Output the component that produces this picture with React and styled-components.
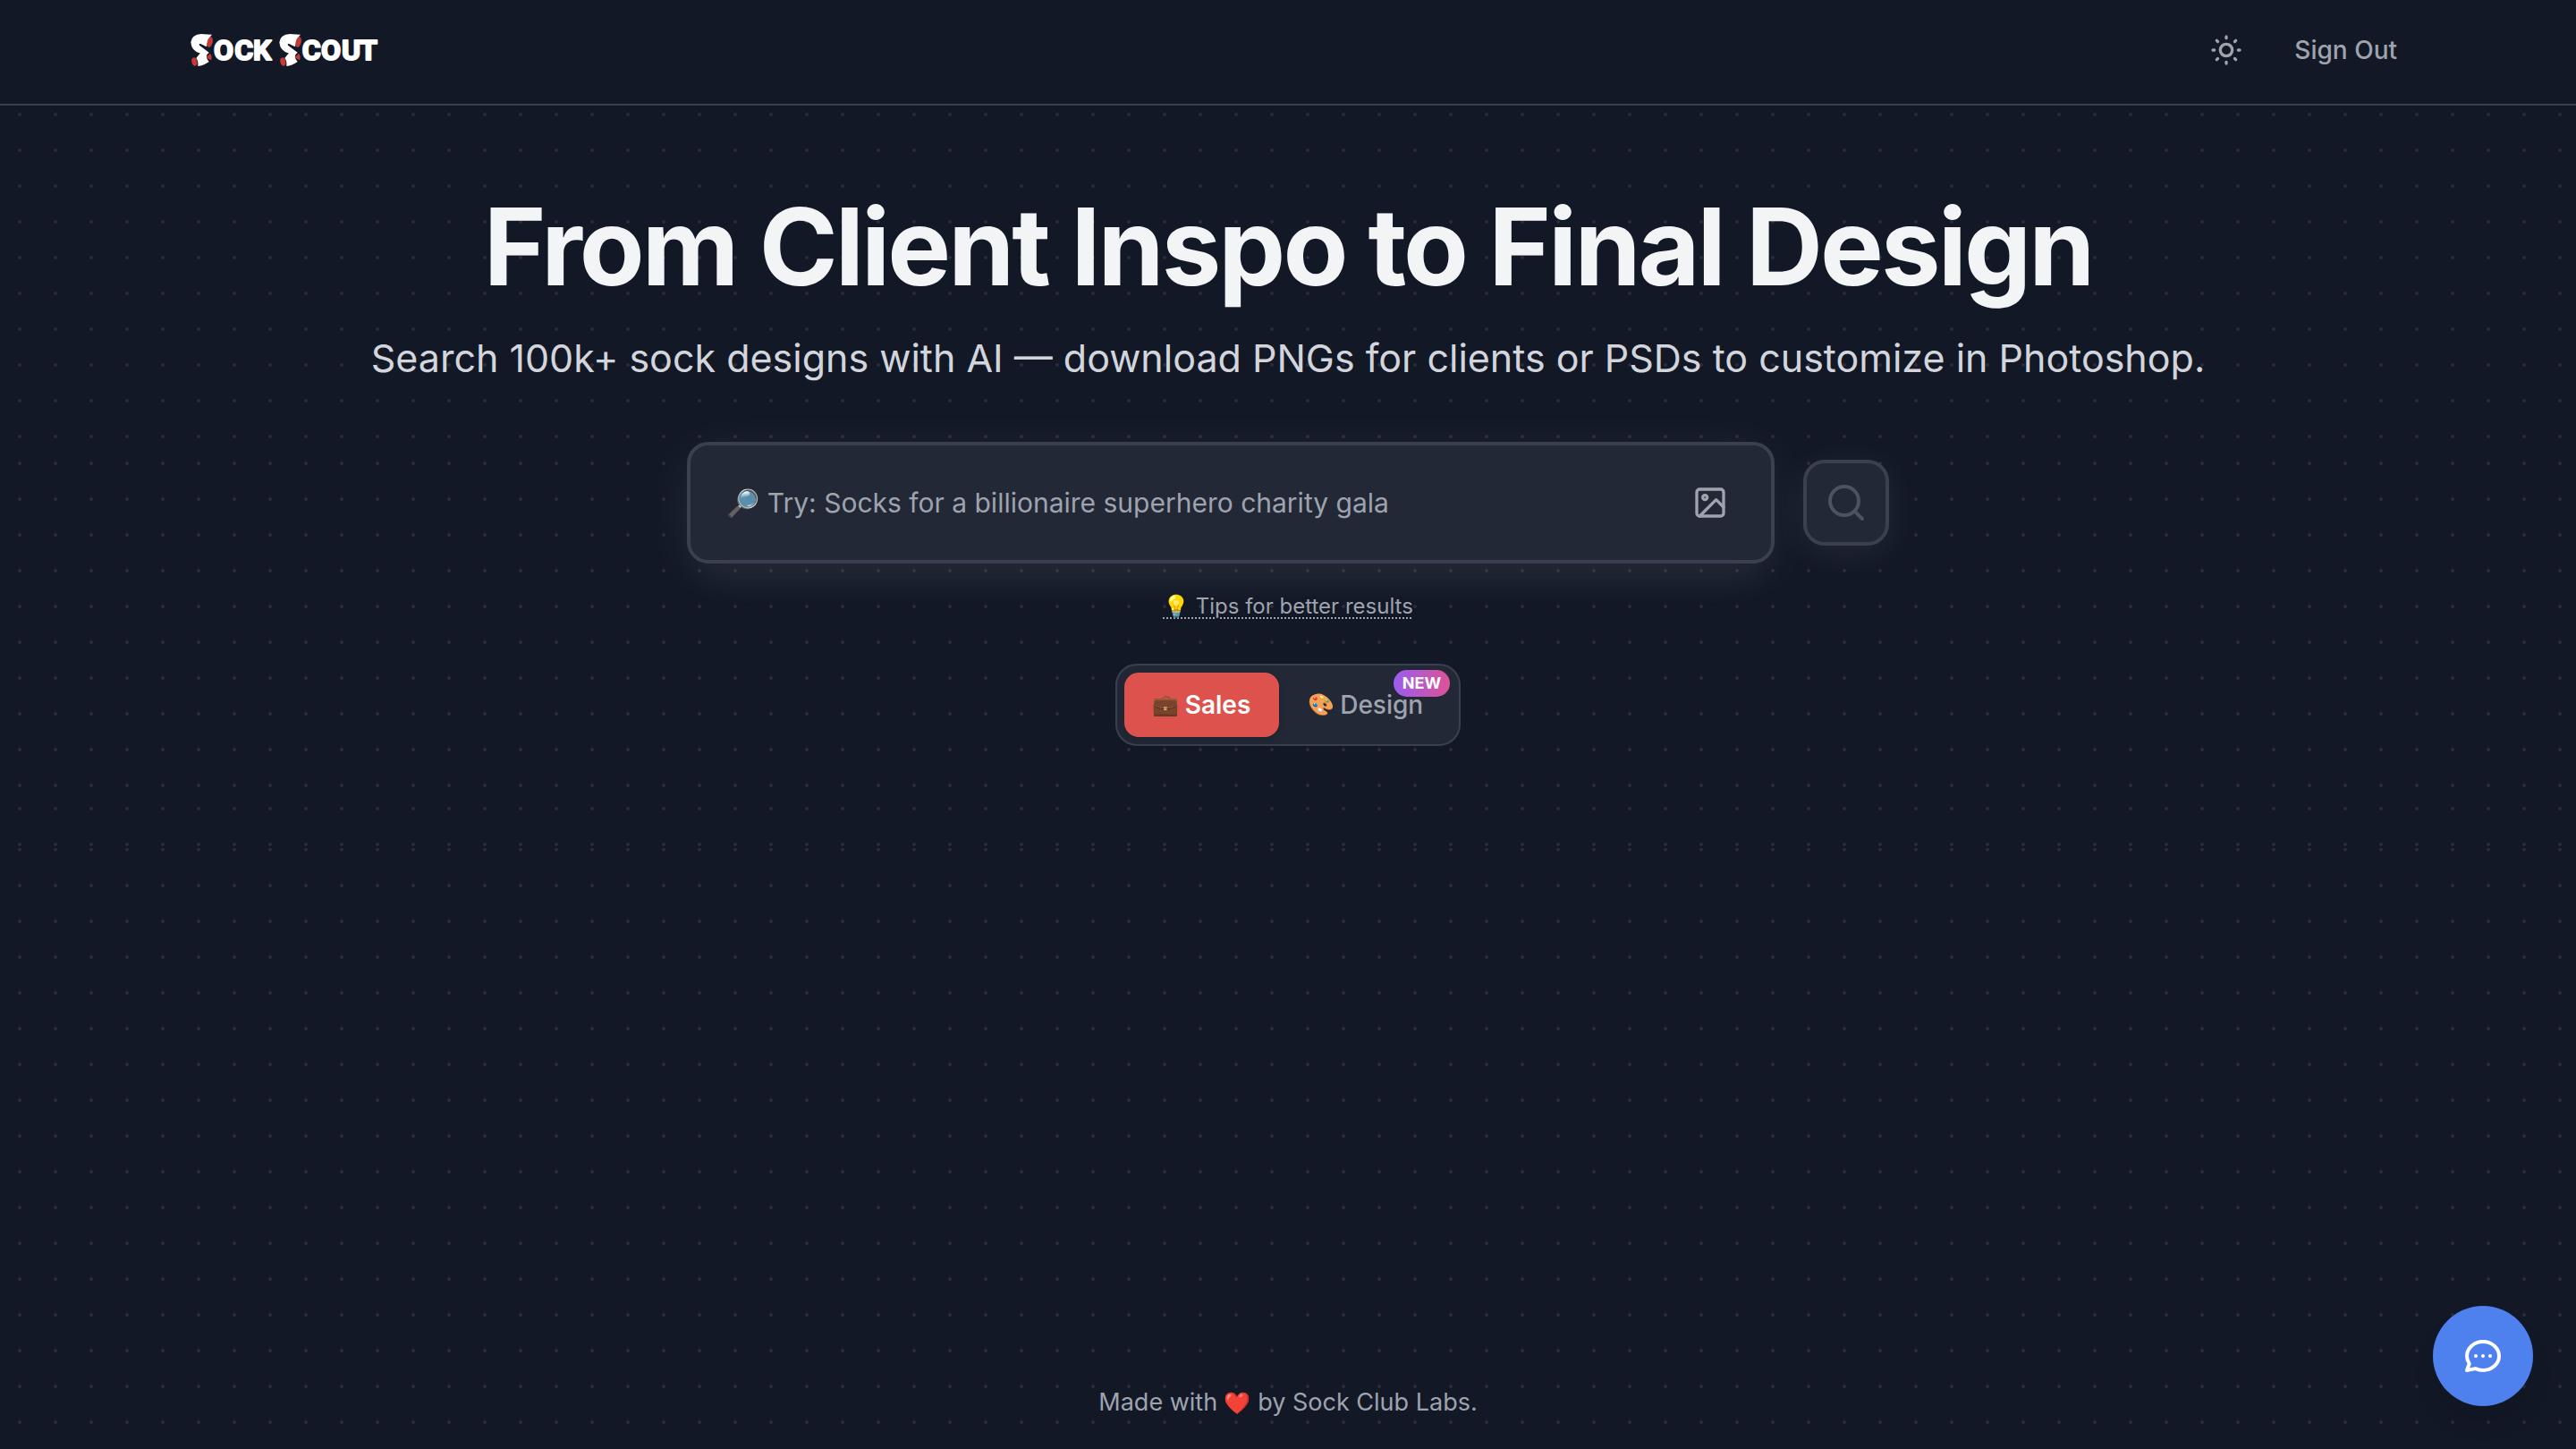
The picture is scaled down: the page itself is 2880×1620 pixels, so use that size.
import React, { useState } from "react";
import styled, { createGlobalStyle, css } from "styled-components";

const color = {
  bg: "#131826",
  card: "#222836",
  line: "#3a404f",
  dot: "#292c38",
  muted: "#9fa3ae",
  faint: "#4c525f",
  soft: "#d2d5db",
  title: "#f3f4f6",
  red: "#dd524d",
  blue: "#4e81ee",
};

const GlobalStyle = createGlobalStyle`
  *, *::before, *::after { box-sizing: border-box; }
  body {
    margin: 0;
    background: ${color.bg};
    color: ${color.muted};
    font-family: Inter, "Noto Color Emoji", sans-serif;
    font-size: 28px;
    line-height: 40px;
  }
  button, input { font: inherit; color: inherit; }
  button { cursor: pointer; border: 0; background: none; padding: 0; }
`;

const Page = styled.div`
  min-height: 100vh;
  display: flex;
  flex-direction: column;
`;

const Header = styled.header`
  border-bottom: 2px solid ${color.line};
  padding: 36px 200px 40px 212px;
`;

const Nav = styled.nav`
  display: flex;
  align-items: center;
  justify-content: space-between;
`;

const LogoLink = styled.a`
  display: flex;
`;

const LogoText = styled.text`
  font-family: Roboto, sans-serif;
  font-size: 96px;
  font-weight: 700;
  fill: #fff;
  stroke: #fff;
  stroke-width: 6px;
  stroke-linejoin: round;
`;

const NavActions = styled.div`
  display: flex;
  align-items: center;
  gap: 56px;
`;

const NavButton = styled.button`
  display: flex;
  font-weight: 500;
`;

const Dotted = styled.section`
  display: flex;
  flex-direction: column;
  align-items: center;
  background-image: radial-gradient(
    circle at 22px ${(p) => p.$dotTop}px,
    ${color.dot} 2px,
    transparent 2px
  );
  background-size: 40px 40px;
`;

const Intro = styled(Dotted)`
  padding: 98px 48px 62px;
  text-align: center;
`;

const Title = styled.h1`
  margin: 0;
  color: ${color.title};
  font-size: 119px;
  line-height: 120px;
  font-weight: 700;
  letter-spacing: -0.025em;
`;

const Subtitle = styled.p`
  margin: 32px 0 0;
  color: ${color.soft};
  font-size: 43px;
  line-height: 64px;
`;

const SearchSection = styled(Dotted)`
  padding: 0 48px 60px;
`;

const SearchForm = styled.form`
  display: flex;
  align-items: center;
  gap: 32px;
  width: 100%;
  max-width: 1344px;
`;

const panel = css`
  border: 4px solid ${color.line};
  border-radius: 24px;
  background: ${color.card};
`;

const SearchField = styled.div`
  ${panel}
  flex: 1;
  display: flex;
  align-items: center;
  height: 136px;
  padding: 0 48px 0 40px;
  box-shadow:
    0 10px 60px rgba(229, 235, 240, 0.07),
    0 30px 40px -10px rgba(229, 235, 240, 0.04);
`;

const SearchInput = styled.input`
  flex: 1;
  min-width: 0;
  border: 0;
  padding: 0;
  outline: 0;
  background: none;
  font-size: 30px;
  &::placeholder {
    color: ${color.muted};
    opacity: 1;
  }
`;

const IconButton = styled.button`
  display: flex;
`;

const SearchButton = styled.button`
  ${panel}
  display: flex;
  align-items: center;
  justify-content: center;
  width: 96px;
  height: 96px;
  color: ${color.faint};
  box-shadow: 0 8px 40px rgba(229, 235, 240, 0.08);
`;

const TipsButton = styled.button`
  margin-top: 32px;
  font-size: 24px;
  line-height: 32px;
  text-decoration: underline dotted 2px;
  text-underline-offset: 4px;
`;

const Toggle = styled.div`
  display: flex;
  margin-top: 48px;
  padding: 8px;
  border: 2px solid ${color.line};
  border-radius: 24px;
  background: ${color.card};
`;

const ToggleOption = styled.button`
  position: relative;
  display: flex;
  align-items: center;
  gap: 6px;
  padding: 16px 32px;
  border-radius: 16px;
  font-weight: 500;
  ${(p) =>
    p.$active &&
    css`
      background: ${color.red};
      color: #fff;
      font-weight: 600;
      box-shadow: 0 4px 12px rgba(0, 0, 0, 0.15);
    `}
`;

const Emoji = styled.span`
  font-size: 24px;
  line-height: 32px;
`;

const Badge = styled.span`
  position: absolute;
  top: -3px;
  right: 2px;
  padding: 0 10px;
  border-radius: 15px;
  background: linear-gradient(90deg, #9b5cf0, #dc5396);
  color: #fff;
  font-size: 18px;
  line-height: 30px;
  font-weight: 700;
`;

const Results = styled(Dotted)`
  padding: 27px 0;
`;

const Bottom = styled(Dotted)`
  flex: 1;
  justify-content: flex-end;
  padding: 32px;
`;

const Footer = styled.footer`
  font-size: 27px;
  text-align: center;
`;

const ChatButton = styled.button`
  position: fixed;
  right: 48px;
  bottom: 48px;
  display: flex;
  align-items: center;
  justify-content: center;
  width: 112px;
  height: 112px;
  border-radius: 50%;
  && {
    background: ${color.blue};
    color: #fff;
  }
  box-shadow: 0 20px 30px -6px rgba(0, 0, 0, 0.12);
`;

function Icon({ size, children }) {
  return (
    <svg
      width={size}
      height={size}
      viewBox="0 0 24 24"
      fill="none"
      stroke="currentColor"
      strokeWidth="2"
      strokeLinecap="round"
      strokeLinejoin="round"
      aria-hidden="true"
    >
      {children}
    </svg>
  );
}

function Sock({ x }) {
  return (
    <g transform={`translate(${x} 0)`}>
      <path
        fill="#fff"
        d="M105 54 L141 56 Q128 68 123 97 L101 86 Q96 87 99 92 L131 116 Q114 128 131 147 Q112 160 94 162 Q96 145 88 135 L98 122 L102 119 Q72 112 70 82 Q72 56 105 54Z"
      />
      <g fill="#c43b36">
        <ellipse cx="134" cy="81" rx="9" ry="18" transform="rotate(14 134 81)" />
        <ellipse cx="82" cy="147" rx="9" ry="14" transform="rotate(-12 82 147)" />
        <path d="M122 131 Q130 125 135 119 Q143 130 138 142 Q130 140 122 131Z" />
      </g>
    </g>
  );
}

function Logo() {
  return (
    <svg width="212" height="40" viewBox="66 48 636 120" role="img" aria-label="Sock Scout">
      <Sock x={0} />
      <LogoText x="147 217 279" y="142">OCK</LogoText>
      <Sock x={297} />
      <LogoText x="443 507 576 636" y="142">COUT</LogoText>
    </svg>
  );
}

export default function App() {
  const [mode, setMode] = useState("sales");
  const [query, setQuery] = useState("");

  return (
    <Page>
      <GlobalStyle />
      <Header>
        <Nav>
          <LogoLink href="#">
            <Logo />
          </LogoLink>
          <NavActions>
            <NavButton type="button" aria-label="Toggle theme">
              <Icon size={40}>
                <circle cx="12" cy="12" r="4" />
                <path d="M3 12h1m8-9v1m8 8h1m-9 8v1M5.6 5.6l.7.7m12.1-.7l-.7.7m0 11.4l.7.7m-12.1-.7l-.7.7" />
              </Icon>
            </NavButton>
            <NavButton type="button">Sign Out</NavButton>
          </NavActions>
        </Nav>
      </Header>

      <Intro $dotTop={10}>
        <Title>From Client Inspo to Final Design</Title>
        <Subtitle>
          Search 100k+ sock designs with AI — download PNGs for clients or PSDs to customize in
          Photoshop.
        </Subtitle>
      </Intro>

      <SearchSection $dotTop={24}>
        <SearchForm onSubmit={(e) => e.preventDefault()}>
          <SearchField>
            <SearchInput
              type="text"
              aria-label="Search sock designs"
              placeholder="🔎 Try: Socks for a billionaire superhero charity gala"
              value={query}
              onChange={(e) => setQuery(e.target.value)}
            />
            <IconButton type="button" aria-label="Search by image">
              <Icon size={40}>
                <rect x="3" y="3" width="18" height="18" rx="2" />
                <circle cx="8.5" cy="8.5" r="1.5" />
                <path d="M21 15l-5-5L5 21" />
              </Icon>
            </IconButton>
          </SearchField>
          <SearchButton type="submit" aria-label="Search">
            <Icon size={48}>
              <circle cx="11" cy="11" r="8" />
              <path d="M21 21l-4.35-4.35" />
            </Icon>
          </SearchButton>
        </SearchForm>

        <TipsButton type="button">💡 Tips for better results</TipsButton>

        <Toggle role="group" aria-label="Mode">
          <ToggleOption
            type="button"
            $active={mode === "sales"}
            aria-pressed={mode === "sales"}
            onClick={() => setMode("sales")}
          >
            <Emoji>💼</Emoji>
            Sales
          </ToggleOption>
          <ToggleOption
            type="button"
            $active={mode === "design"}
            aria-pressed={mode === "design"}
            onClick={() => setMode("design")}
          >
            <Emoji>🎨</Emoji>
            Design
            <Badge>NEW</Badge>
          </ToggleOption>
        </Toggle>
      </SearchSection>

      <Results $dotTop={10} />

      <Bottom $dotTop={2}>
        <Footer>
          Made with <Emoji>❤️</Emoji> by Sock Club Labs.
        </Footer>
      </Bottom>

      <ChatButton type="button" aria-label="Open chat">
        <Icon size={48}>
          <path d="M8 12h.01M12 12h.01M16 12h.01M21 12c0 4.418-4.03 8-9 8a9.863 9.863 0 01-4.255-.949L3 20l1.395-3.72C3.512 15.042 3 13.574 3 12c0-4.418 4.03-8 9-8s9 3.582 9 8z" />
        </Icon>
      </ChatButton>
    </Page>
  );
}
